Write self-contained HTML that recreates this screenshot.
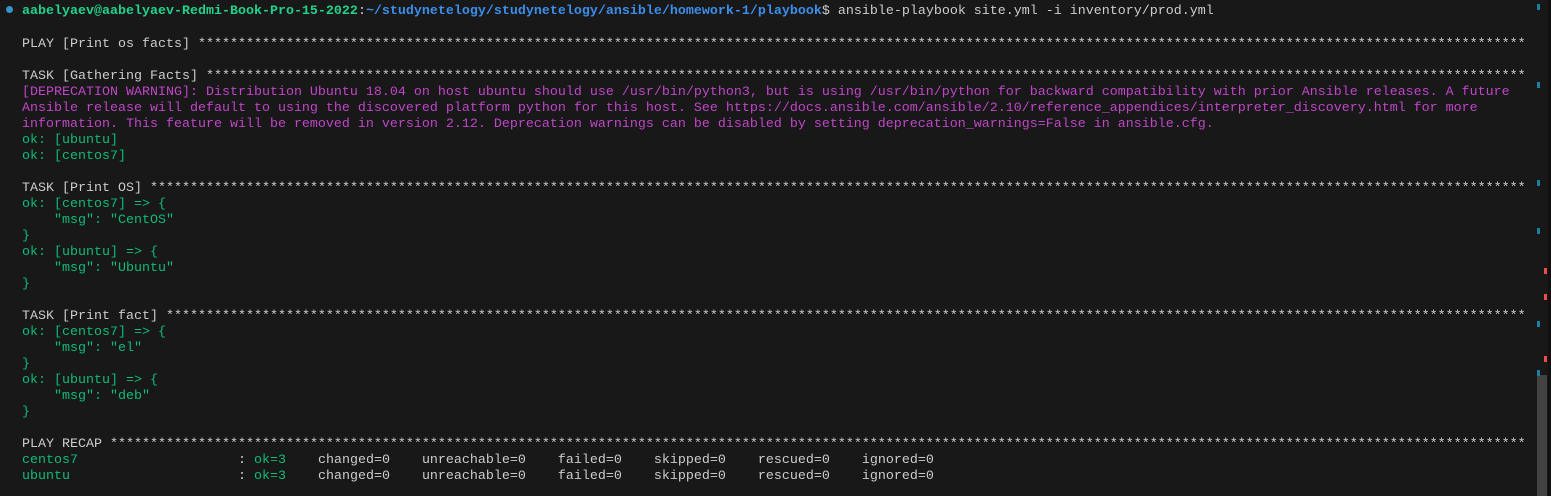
<!DOCTYPE html>
<html><head><meta charset="utf-8"><style>
html,body{margin:0;padding:0;background:#181818;width:1551px;height:496px;overflow:hidden}
pre{margin:0;position:absolute;left:22px;top:5px;font-family:"Liberation Mono",monospace;font-size:13.33px;line-height:16px;color:#cccccc;white-space:pre}
.p{position:relative;top:-1px}
.g{color:#23d18b}.gb{color:#23d18b;font-weight:bold}.b{color:#3b8eea;font-weight:bold}
.m{color:#c045c8}.o{color:#0dbc79}
.dot{position:absolute;left:6px;top:6px;width:7px;height:7px;border-radius:50%;background:#3794c8}
.mk{position:absolute;width:3px;height:6px}
.bl{background:#1b7fa3;left:1537px}.rd{background:#f14c4c;left:1544px}
.thumb{position:absolute;left:1537px;top:375px;width:10px;height:121px;background:#424242}
.edge{position:absolute;left:1548px;top:0;width:3px;height:496px;background:#111}
</style></head><body>
<div class="dot"></div>
<pre id="t"><span class="p"><span class="gb">aabelyaev@aabelyaev-Redmi-Book-Pro-15-2022</span>:<span class="b">~/studynetelogy/studynetelogy/ansible/homework-1/playbook</span>$ ansible-playbook site.yml -i inventory/prod.yml</span>

PLAY [Print os facts] <span class="s" data-n="166"></span>

TASK [Gathering Facts] <span class="s" data-n="165"></span>
<span class="m">[DEPRECATION WARNING]: Distribution Ubuntu 18.04 on host ubuntu should use /usr/bin/python3, but is using /usr/bin/python for backward compatibility with prior Ansible releases. A future
Ansible release will default to using the discovered platform python for this host. See https://docs.ansible.com/ansible/2.10/reference_appendices/interpreter_discovery.html for more
information. This feature will be removed in version 2.12. Deprecation warnings can be disabled by setting deprecation_warnings=False in ansible.cfg.</span>
<span class="o">ok: [ubuntu]
ok: [centos7]</span>

TASK [Print OS] <span class="s" data-n="172"></span>
<span class="o">ok: [centos7] =&gt; {
    "msg": "CentOS"
}
ok: [ubuntu] =&gt; {
    "msg": "Ubuntu"
}</span>

TASK [Print fact] <span class="s" data-n="170"></span>
<span class="o">ok: [centos7] =&gt; {
    "msg": "el"
}
ok: [ubuntu] =&gt; {
    "msg": "deb"
}</span>

PLAY RECAP <span class="s" data-n="177"></span>
<span class="o">centos7</span>                    : <span class="o">ok=3</span>    changed=0    unreachable=0    failed=0    skipped=0    rescued=0    ignored=0
<span class="o">ubuntu</span>                     : <span class="o">ok=3</span>    changed=0    unreachable=0    failed=0    skipped=0    rescued=0    ignored=0</pre>
<div class="edge"></div>
<div class="thumb"></div>
<div class="mk bl" style="top:4px"></div>
<div class="mk bl" style="top:82px"></div>
<div class="mk bl" style="top:180px"></div>
<div class="mk bl" style="top:228px"></div>
<div class="mk bl" style="top:321px"></div>
<div class="mk bl" style="top:370px"></div>
<div class="mk rd" style="top:268px"></div>
<div class="mk rd" style="top:294px"></div>
<div class="mk rd" style="top:356px"></div>
<script>
document.querySelectorAll('.s').forEach(function(e){e.textContent='*'.repeat(+e.getAttribute('data-n'));});
</script>
</body></html>
